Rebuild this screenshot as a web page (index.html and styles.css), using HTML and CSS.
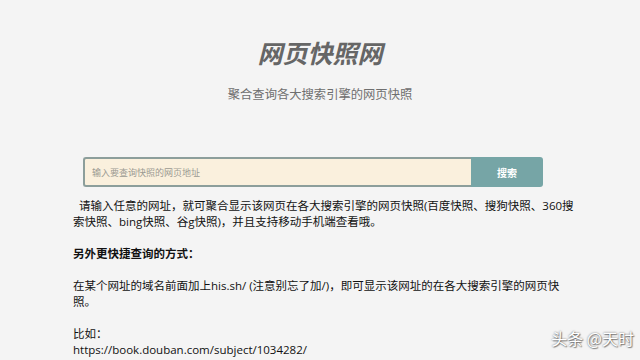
FILE: index.html
```html
<!DOCTYPE html>
<html lang="zh-CN">
<head>
  <meta charset="UTF-8">
  <meta name="viewport" content="width=device-width, initial-scale=1.0">
  <title>网页快照网</title>
  <link rel="stylesheet" href="styles.css">
</head>
<body>

<div class="header">
  <h1>网页快照网</h1>
  <p class="subtitle">聚合查询各大搜索引擎的网页快照</p>
</div>

<form class="search" onsubmit="return false">
  <input type="text" class="search-input" placeholder="输入要查询快照的网页地址">
  <button type="submit" class="search-btn">搜索</button>
</form>

<div class="content">
  <p>&nbsp;&nbsp;请输入任意的网址，就可聚合显示该网页在各大搜索引擎的网页快照(百度快照、搜狗快照、360搜索快照、bing快照、谷g快照)，并且支持移动手机端查看哦。</p>
  <p class="bold">另外更快捷查询的方式：</p>
  <p>在某个网址的域名前面加上his.sh/ (注意别忘了加/)，即可显示该网址的在各大搜索引擎的网页快照。</p>
  <p>比如：<br>https://book.douban.com/subject/1034282/</p>
</div>

<div class="watermark">头条 @天时</div>

</body>
</html>
```

FILE: styles.css
```css
body {
  margin: 0;
  padding: 0;
  background-color: #f4f4f4;
  font-family: "Open Sans", "Noto Sans CJK SC", sans-serif;
  color: #111;
  height: 360px;
  overflow: hidden;
}

.header {
  text-align: center;
  padding-top: 36px;
}

h1 {
  margin: 0;
  font-family: "Noto Sans CJK SC", sans-serif;
  font-size: 25px;
  font-weight: bold;
  font-style: italic;
  color: #666;
  line-height: 32px;
}

.subtitle {
  margin: 16px 0 0;
  font-family: "Noto Sans CJK SC", sans-serif;
  font-size: 12.3px;
  color: #6f6f6f;
  line-height: 20px;
}

.search {
  display: flex;
  width: 460px;
  height: 30px;
  margin: 53px 0 0 83px;
}

.search-input {
  flex: 1;
  box-sizing: border-box;
  height: 30px;
  margin: 0;
  padding: 0 7px;
  border: 2px solid #8c9e9b;
  border-right: none;
  border-radius: 3px 0 0 3px;
  background-color: #faf0dd;
  font-family: "Noto Sans CJK SC", sans-serif;
  font-size: 9px;
  outline: none;
}

.search-input::placeholder {
  color: #9a9a92;
}

.search-btn {
  width: 72px;
  height: 30px;
  margin: 0;
  border: none;
  border-radius: 0 3px 3px 0;
  background-color: #76a5a6;
  color: #fff;
  font-family: "Noto Sans CJK SC", sans-serif;
  font-size: 10px;
  font-weight: bold;
  cursor: pointer;
}

.content {
  width: 503px;
  margin: 11px 0 0 73px;
  font-size: 11.5px;
  line-height: 16px;
}

.content p {
  margin: 0 0 16px;
}

.bold {
  font-weight: bold;
}

.watermark {
  position: absolute;
  right: 6px;
  bottom: 10px;
  font-family: "Noto Sans CJK SC", sans-serif;
  font-size: 16px;
  color: #fff;
  text-shadow: 0 0 2px rgba(0, 0, 0, 0.6), 1px 1px 1px rgba(0, 0, 0, 0.4);
}
```
